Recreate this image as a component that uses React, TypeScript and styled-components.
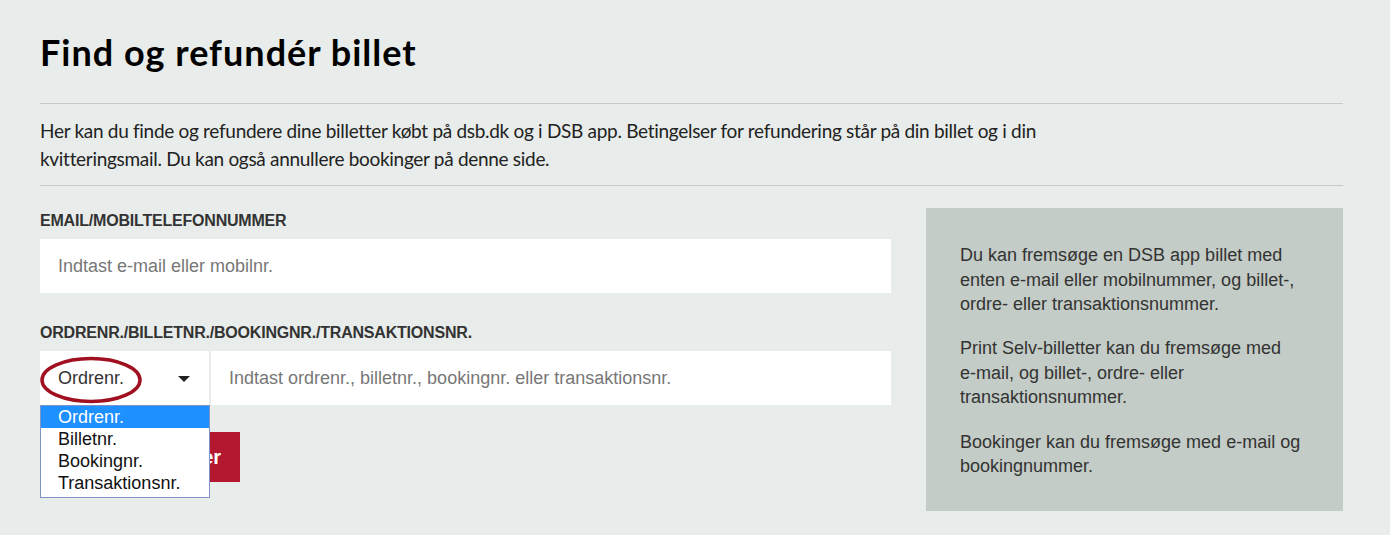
import styled, { createGlobalStyle } from "styled-components";

const GlobalStyle = createGlobalStyle`
  html, body {
    margin: 0;
    padding: 0;
    background: #e8ecea;
  }
  body {
    font-family: "Liberation Sans", Arial, sans-serif;
  }
`;

const Page = styled.main`
  width: 1390px;
  height: 535px;
  box-sizing: border-box;
  padding: 0 47px 0 40px;
  background: #e8ecea;
  overflow: hidden;
`;

const Title = styled.h1`
  margin: 0;
  padding: 31px 0 30px;
  font-family: Lato, "Open Sans", sans-serif;
  font-weight: 700;
  font-size: 36px;
  line-height: 42px;
  letter-spacing: 1px;
  color: #000;
`;

const Divider = styled.hr`
  margin: 0;
  border: none;
  border-top: 1px solid #c5cac7;
`;

const Intro = styled.p`
  max-width: 1060px;
  margin: 0;
  padding: 13px 0 12px;
  font-family: Lato, "Open Sans", sans-serif;
  font-size: 19px;
  line-height: 28px;
  letter-spacing: -0.3px;
  color: #222;
`;

const Content = styled.div`
  display: flex;
  gap: 35px;
  margin-top: 22px;
`;

const FormColumn = styled.form`
  flex: 0 0 851px;
  display: flex;
  flex-direction: column;
`;

const Label = styled.label`
  display: block;
  margin: 5px 0 10px;
  font-size: 16px;
  line-height: 16px;
  letter-spacing: -0.2px;
  font-weight: 700;
  color: #333;
  text-transform: uppercase;
`;

const TextInput = styled.input`
  display: block;
  box-sizing: border-box;
  width: 100%;
  height: 54px;
  padding: 0 18px;
  border: none;
  background: #fff;
  font-family: "Liberation Sans", Arial, sans-serif;
  font-size: 18px;
  color: #222;
  outline: none;
  &::placeholder {
    color: #777;
  }
`;

const FieldGroup = styled.div<{ $gap?: number }>`
  margin-bottom: ${(p) => p.$gap ?? 0}px;
`;

const SplitRow = styled.div`
  display: flex;
  gap: 2px;
  height: 55px;
`;

const SelectBox = styled.div`
  position: relative;
  flex: 0 0 169px;
  box-sizing: border-box;
  padding: 0 18px;
  background: #fff;
  display: flex;
  align-items: center;
  justify-content: space-between;
  font-size: 18px;
  color: #333;
`;

const Caret = styled.span`
  width: 0;
  height: 0;
  margin-right: 1px;
  border-left: 6px solid transparent;
  border-right: 6px solid transparent;
  border-top: 6px solid #222;
`;

const Highlight = styled.svg`
  position: absolute;
  left: 0;
  top: 5px;
  pointer-events: none;
`;

const OptionList = styled.ul`
  position: absolute;
  left: 0;
  top: 54px;
  width: 170px;
  box-sizing: border-box;
  margin: 0;
  padding: 0 0 3px;
  list-style: none;
  background: #fff;
  border: 1px solid #7f93c6;
  z-index: 2;
`;

const Option = styled.li<{ $active?: boolean }>`
  padding: 0 17px;
  height: 22px;
  font-size: 18px;
  line-height: 22px;
  color: ${(p) => (p.$active ? "#fff" : "#111")};
  background: ${(p) => (p.$active ? "#1e90ff" : "transparent")};
`;

const SubmitButton = styled.button`
  align-self: flex-start;
  margin-top: 26px;
  width: 200px;
  height: 50px;
  border: none;
  background: #b41730;
  color: #fff;
  font-family: "Liberation Sans", Arial, sans-serif;
  font-weight: 700;
  font-size: 20px;
  cursor: pointer;
`;

const InfoPanel = styled.aside`
  flex: 0 0 417px;
  height: 303px;
  box-sizing: border-box;
  padding: 35px 38px 34px 34px;
  background: #c3ccc6;
`;

const InfoText = styled.p`
  margin: 0 0 19.5px;
  font-size: 18px;
  line-height: 24.6px;
  color: #333;
`;

const NoWrap = styled.span`
  white-space: nowrap;
`;

const options = ["Ordrenr.", "Billetnr.", "Bookingnr.", "Transaktionsnr."];

export default function App() {
  return (
    <Page>
      <GlobalStyle />
      <Title>Find og refundér billet</Title>
      <Divider />
      <Intro>
        Her kan du finde og refundere dine billetter købt på dsb.dk og i DSB app. Betingelser for refundering står på
        din billet og i din kvitteringsmail. Du kan også annullere bookinger på denne side.
      </Intro>
      <Divider />
      <Content>
        <FormColumn onSubmit={(e) => e.preventDefault()}>
          <FieldGroup $gap={27}>
            <Label htmlFor="contact">Email/Mobiltelefonnummer</Label>
            <TextInput id="contact" placeholder="Indtast e-mail eller mobilnr." />
          </FieldGroup>
          <FieldGroup>
            <Label htmlFor="number">Ordrenr./Billetnr./Bookingnr./Transaktionsnr.</Label>
            <SplitRow>
              <SelectBox>
                <span>Ordrenr.</span>
                <Caret />
                <Highlight width="104" height="48" viewBox="0 0 104 48">
                  <ellipse cx="51" cy="24" rx="49" ry="21.5" fill="none" stroke="#a01020" strokeWidth="3.5" />
                </Highlight>
                <OptionList>
                  {options.map((o, i) => (
                    <Option key={o} $active={i === 0}>
                      {o}
                    </Option>
                  ))}
                </OptionList>
              </SelectBox>
              <TextInput id="number" placeholder="Indtast ordrenr., billetnr., bookingnr. eller transaktionsnr." />
            </SplitRow>
          </FieldGroup>
          <SubmitButton type="submit">Fremsøg billetter</SubmitButton>
        </FormColumn>
        <InfoPanel>
          <InfoText>
            Du kan fremsøge en DSB app billet med enten <NoWrap>e-mail</NoWrap> eller mobilnummer, og billet-, ordre-
            eller transaktionsnummer.
          </InfoText>
          <InfoText>
            Print Selv-billetter kan du fremsøge med <NoWrap>e-mail,</NoWrap> og billet-, ordre- eller
            transaktionsnummer.
          </InfoText>
          <InfoText>
            Bookinger kan du fremsøge med <NoWrap>e-mail</NoWrap> og bookingnummer.
          </InfoText>
        </InfoPanel>
      </Content>
    </Page>
  );
}
